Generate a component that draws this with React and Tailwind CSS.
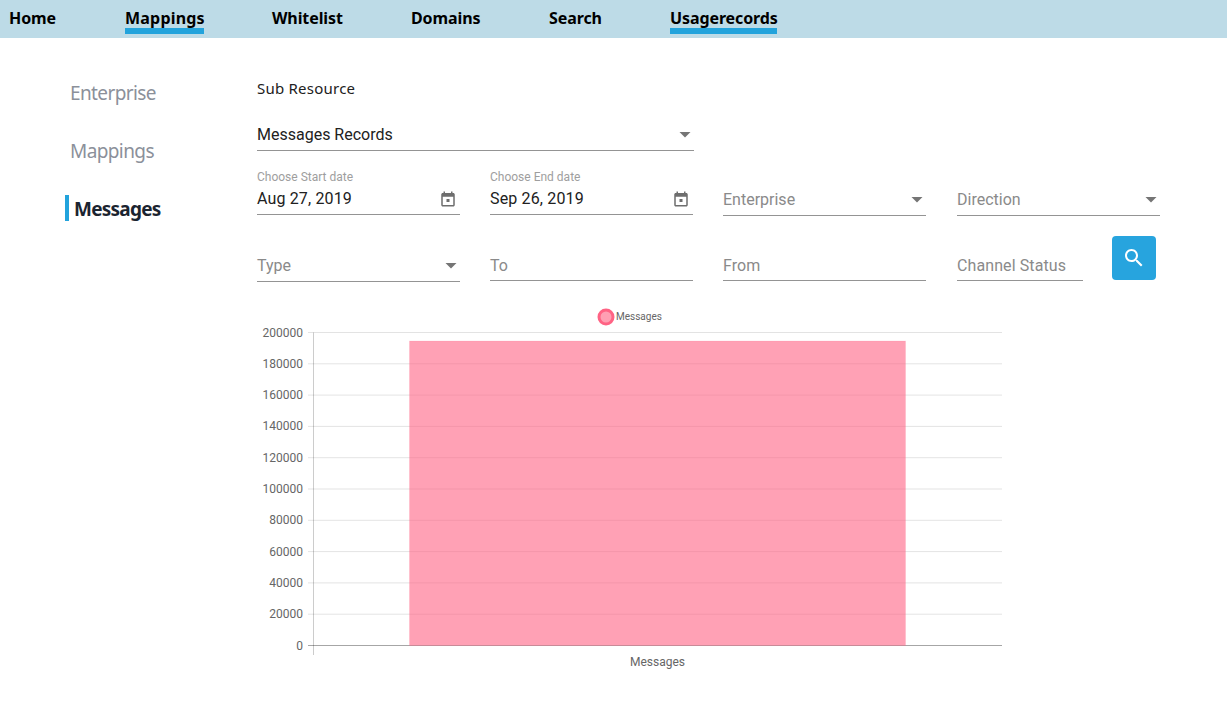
const navItems = [
  { label: "Home", width: "w-[48px]" },
  { label: "Mappings", width: "w-[79px] tracking-[0.2px]", active: true },
  { label: "Whitelist", width: "w-[71px]" },
  { label: "Domains", width: "w-[70px]" },
  { label: "Search", width: "w-[53px]" },
  { label: "Usagerecords", width: "w-[107px]", active: true },
]

const yTicks = [200000, 180000, 160000, 140000, 120000, 100000, 80000, 60000, 40000, 20000, 0]

function Caret() {
  return (
    <svg width="12" height="6" viewBox="0 0 12 6" className="shrink-0">
      <path d="M0.5 0h11L6 5.500z" fill="#757575" />
    </svg>
  )
}

function CalendarIcon() {
  return (
    <svg width="18" height="18" viewBox="0 0 24 24" className="shrink-0">
      <path
        fill="#6e6e6e"
        d="M19 4h-1V2h-2v2H8V2H6v2H5c-1.100 0-2 .9-2 2v14c0 1.100.9 2 2 2h14c1.100 0 2-.9 2-2V6c0-1.100-.9-2-2-2zm0 16H5V9h14v11zM10 12h4v4h-4z"
      />
    </svg>
  )
}

function SearchIcon() {
  return (
    <svg width="24" height="24" viewBox="0 0 24 24">
      <path
        fill="#fff"
        d="M15.500 14h-.79l-.28-.27C15.410 12.590 16 11.110 16 9.500 16 5.910 13.090 3 9.500 3S3 5.910 3 9.500 5.910 16 9.500 16c1.610 0 3.090-.59 4.230-1.570l.27.28v.79l5 4.990L20.490 19l-4.990-5zm-6 0C7.010 14 5 11.990 5 9.500S7.010 5 9.500 5 14 7.010 14 9.500 11.990 14 9.500 14z"
      />
    </svg>
  )
}

function DateField({ label, value }) {
  return (
    <div className="flex h-[47px] flex-col border-b border-[#949494] pt-[2px]">
      <span className="h-[14px] text-[12px] leading-[14px] text-[#9e9e9e]">{label}</span>
      <div className="mt-[4px] flex items-center justify-between pr-[3px]">
        <span className="text-[16px] leading-[22px] tracking-[0.15px] text-[#212121]">{value}</span>
        <CalendarIcon />
      </div>
    </div>
  )
}

function SelectField({ label }) {
  return (
    <div className="flex h-[33px] items-center justify-between border-b border-[#949494] pt-[2px] pr-[3px]">
      <span className="text-[16px] text-[#8a8a8a]">{label}</span>
      <Caret />
    </div>
  )
}

function TextField({ label }) {
  return (
    <div className="flex h-[32px] items-center border-b border-[#949494] pt-[2px]">
      <span className="text-[16px] tracking-[0.1px] text-[#8a8a8a]">{label}</span>
    </div>
  )
}

// bar chart, same look as the chart.js canvas
function Chart() {
  const top = 27.5
  const step = 31.3
  return (
    <svg width="760" height="380" viewBox="0 0 760 380" className="block" style={{ fontFamily: "Roboto, sans-serif" }}>
      <circle cx="349" cy="12" r="7" fill="#ff9fb3" stroke="#ff6384" strokeWidth="3" />
      <text x="359" y="15" fontSize="10" fill="#666">Messages</text>
      {yTicks.map((t, i) => {
        const y = top + i * step
        return (
          <g key={t}>
            <line x1="51" x2="745" y1={y} y2={y} stroke={t === 0 ? "#a6a6a6" : "#000"} strokeOpacity={t === 0 ? 1 : 0.11} />
            <text x="46" y={y + 4} textAnchor="end" fontSize="12" fill="#666">{t}</text>
          </g>
        )
      })}
      <line x1="56.500" x2="56.500" y1={top} y2="350" stroke="#000" strokeOpacity="0.2" />
      <rect x="152.500" y="36" width="496" height="304.500" fill="#ff6384" fillOpacity="0.6" />
      <rect x="152.500" y="36" width="496" height="304.500" fill="none" stroke="#ff6384" strokeOpacity="0.12" />
      <text x="400.500" y="361" textAnchor="middle" fontSize="12" fill="#666">Messages</text>
    </svg>
  )
}

export default function App() {
  return (
    <div className="min-h-screen bg-white" style={{ fontFamily: "Roboto, sans-serif" }}>
      <nav className="flex h-[38px] gap-[68px] bg-[#bddbe7] pl-[9px]" style={{ fontFamily: '"Noto Sans", sans-serif' }}>
        {navItems.map((item) => (
          <div
            key={item.label}
            className={`flex h-[34px] items-center whitespace-nowrap border-b-[6px] pt-[8px] text-[16px] font-bold tracking-[-0.1px] text-black ${item.width} ${
              item.active ? "border-[#22a3dc]" : "border-transparent"
            }`}
          >
            {item.label}
          </div>
        ))}
      </nav>

      <div className="flex">
        <aside className="w-[257px] shrink-0 pt-[39px] pl-[65px]" style={{ fontFamily: '"Noto Sans", sans-serif' }}>
          <div className="pl-[5px] text-[19px] leading-[32px] tracking-[-0.6px] text-[#8b909a]">Enterprise</div>
          <div className="mt-[26px] pl-[5px] text-[19px] leading-[32px] tracking-[-0.6px] text-[#8b909a]">Mappings</div>
          <div className="mt-[28px] flex h-[26px] items-center border-l-4 border-[#22a3dc] pt-[3px] pl-[5px] text-[19px] font-bold tracking-[-0.75px] text-[#1b2430]">
            Messages
          </div>
        </aside>

        <main className="flex-1">
          <div
            className="mt-[39px] text-[15px] leading-[22px] tracking-[0.23px] text-[#212121]"
            style={{ fontFamily: '"Noto Sans", sans-serif' }}
          >
            Sub Resource
          </div>

          <div className="mt-[20px] flex h-[32px] w-[437px] items-center justify-between border-b border-[#949494] pr-[3px]">
            <span className="text-[16px] text-[#212121]">Messages Records</span>
            <Caret />
          </div>

          <div className="mt-[17px] grid w-[904px] grid-cols-[203px_203px_204px_203px] items-end gap-x-[30px]">
            <DateField label="Choose Start date" value="Aug 27, 2019" />
            <DateField label="Choose End date" value="Sep 26, 2019" />
            <div className="mb-[-1px] w-[203px]"><SelectField label="Enterprise" /></div>
            <div className="mb-[-1px]"><SelectField label="Direction" /></div>
          </div>

          <div className="mt-[21px] flex h-[46px] w-[904px] items-start gap-x-[30px]">
            <div className="mt-[13px] w-[203px]"><SelectField label="Type" /></div>
            <div className="mt-[13px] w-[203px]"><TextField label="To" /></div>
            <div className="mt-[13px] mr-[1px] w-[203px]"><TextField label="From" /></div>
            <div className="mt-[13px] w-[126px]"><TextField label="Channel Status" /></div>
            <button className="ml-[-1px] flex h-[44px] w-[44px] shrink-0 items-center justify-center rounded-[4px] bg-[#27a4de]">
              <SearchIcon />
            </button>
          </div>

          <div className="mt-[23px]">
            <Chart />
          </div>
        </main>
      </div>
    </div>
  )
}
